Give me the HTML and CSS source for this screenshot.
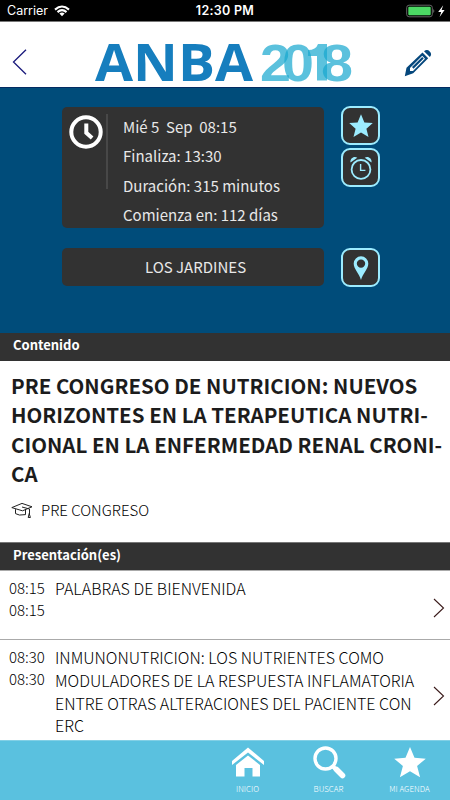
FILE: index.html
```html
<!DOCTYPE html>
<html lang="es">
<head>
<meta charset="utf-8">
<title>ANBA 2018</title>
<link rel="stylesheet" href="styles.css">
</head>
<body>
<div class="app">
  <div class="status">
    <div class="carrier"><span>Carrier</span>
      <svg width="16" height="12" viewBox="0 0 16 12" fill="none" stroke="#fff" stroke-width="2.1"><path d="M1 4.6Q8-1.6 15 4.6M3.5 7.1Q8 3.2 12.5 7.1"/><path d="M5.4 8.6Q8 6.4 10.6 8.6L8 11.3Z" fill="#fff" stroke="none"/></svg>
    </div>
    <div class="time">12:30 PM</div>
    <svg class="battery" width="41" height="14" viewBox="0 0 41 14"><rect x=".7" y="1.2" width="25.6" height="11.6" rx="2.4" fill="none" stroke="#666"/><rect x="2.3" y="2.8" width="22.4" height="8.4" rx="1" fill="#4cd964"/><path d="M27.3 5q2 2 0 4z" fill="#777"/><path d="M37.2 1.2 32.2 8h3l-1.6 5 5-6.9h-3z" fill="#fff"/></svg>
  </div>
  <header class="header">
    <svg class="back" width="16" height="26" viewBox="0 0 16 26" fill="none" stroke="#1a1a7c" stroke-width="1.3"><path d="M14 .8 1.5 13 14 25.2"/></svg>
    <svg class="logo" width="264" height="44" viewBox="0 0 264 44">
      <text class="anba" x="1" y="41" textLength="158" lengthAdjust="spacingAndGlyphs">ANBA</text>
      <g class="year"><text x="166" y="40.5" textLength="31" lengthAdjust="spacingAndGlyphs">2</text><text x="188" y="40.5" textLength="32" lengthAdjust="spacingAndGlyphs">0</text><path d="M224 4h9v36.5h-10V16h-9V10q8 0 10-6z"/><text x="227" y="40.5" textLength="32" lengthAdjust="spacingAndGlyphs">8</text></g>
    </svg>
    <svg class="pencil" width="28" height="28" viewBox="0 0 28 28"><path fill="#05477c" fill-rule="evenodd" d="M18.5 3.6 24.2 9.3 9.2 24.3.8 27.2 2.5 18.8ZM18.2 6.8 6 19v3h3L21 9.7Z"/><path fill="#05477c" d="M8 18 18.2 7.9l1.5 1.6L9.5 19.7ZM20 2.3q3-2.5 5.7.1t.1 5.6Z"/></svg>
  </header>
  <section class="hero">
    <div class="info">
      <svg class="clock" width="34" height="34" viewBox="0 0 34 34" fill="none" stroke="#fff" stroke-width="4"><circle cx="17" cy="17" r="14.7"/><path d="M17.3 8.5v9.3l5.8 5.2"/></svg>
      <div class="rule"></div>
      <div class="details"><div>Mié 5&nbsp; Sep&nbsp; 08:15</div><div>Finaliza: 13:30</div><div>Duración: 315 minutos</div><div>Comienza en: 112 días</div></div>
    </div>
    <div class="actions">
      <div class="btn"><svg width="26" height="26" viewBox="0 0 26 26"><path fill="#9cecff" d="m13 1.3 3.4 8.1 8.4.7-6.4 5.7 2.1 8.2-7.5-4.4L5.5 24l2.1-8.2-6.4-5.7 8.4-.7z"/></svg></div>
      <div class="btn"><svg width="26" height="26" viewBox="0 0 26 26" fill="none" stroke="#9cecff"><circle cx="13" cy="14.4" r="9.4" stroke-width="1.8"/><path d="M12.6 9v6.4h4.8" stroke-width="1.4"/><path d="M2.5 7.6C1.7 3 6.4.5 9.3 2.7Zm21 0C24.3 3 19.6.5 16.7 2.7Z" fill="#9cecff" stroke="none"/></svg></div>
    </div>
    <div class="place">LOS JARDINES</div>
    <div class="btn"><svg width="26" height="26" viewBox="0 0 26 26"><path fill="#9cecff" fill-rule="evenodd" d="M13 25C11 18.500 5.700 14 5.700 8.600a7.300 7.300 0 0 1 14.600 0C20.300 14 15 18.500 13 25ZM13 4.400a4.200 4.200 0 1 0 0 8.400 4.200 4.200 0 0 0 0-8.400Z"/></svg></div>
  </section>
  <h2 class="bar">Contenido</h2>
  <section class="content">
    <h1><span>PRE CONGRESO DE NUTRICION: NUEVOS</span><span>HORIZONTES EN LA TERAPEUTICA NUTRI-</span><span>CIONAL EN LA ENFERMEDAD RENAL CRONI-</span><span>CA</span></h1>
    <div class="tag"><svg width="22" height="17" viewBox="0 0 22 17" fill="none" stroke="#222" stroke-width="1"><path d="M.8 5.600 11 1.400 21 4.800 11.500 8.800ZM4.500 7.200v4.400q3 2.400 10 1v-5M11 5l7.500 2v6M17.200 15.500l1-4 1.200 4z"/></svg><span>PRE CONGRESO</span></div>
  </section>
  <h2 class="bar second">Presentación(es)</h2>
  <div class="row">
    <div class="hours"><div>08:15</div><div>08:15</div></div>
    <div class="subject"><div>PALABRAS DE BIENVENIDA</div></div>
    <svg class="chev" width="12" height="20" viewBox="0 0 12 20"><path d="m1 1 9.500 9L1 19"/></svg>
  </div>
  <div class="row last">
    <div class="hours"><div>08:30</div><div>08:30</div></div>
    <div class="subject"><div>INMUNONUTRICION: LOS NUTRIENTES COMO</div><div>MODULADORES DE LA RESPUESTA INFLAMATORIA</div><div>ENTRE OTRAS ALTERACIONES DEL PACIENTE CON</div><div>ERC</div></div>
    <svg class="chev" width="12" height="20" viewBox="0 0 12 20"><path d="m1 1 9.500 9L1 19"/></svg>
  </div>
  <nav class="tabs">
    <div class="tab"><svg width="34" height="34" viewBox="0 0 34 34" fill="#fff"><path d="M17 1.500 33 15v4L17 6.500 1 19v-4Z"/><path d="M17 9.500 29 19v11.500h-7.500V22h-8v8.500H5V19Z"/></svg><span>INICIO</span></div>
    <div class="tab"><svg width="34" height="34" viewBox="0 0 34 34" fill="none" stroke="#fff"><circle cx="13.500" cy="12.500" r="10.500" stroke-width="3.400"/><path d="m20.500 20 3 3" stroke-width="4"/><path d="m24.500 23.500 6 6" stroke-width="5.600" stroke-linecap="round"/></svg><span>BUSCAR</span></div>
    <div class="tab"><svg width="34" height="34" viewBox="0 0 34 34" fill="#fff"><path d="m17 1 4.500 10.800 11.300.9-8.700 7.200 3 11.400L17 25.200 6.900 31.300l3-11.400-8.700-7.200 11.300-.9z"/></svg><span>MI AGENDA</span></div>
  </nav>
</div>
</body>
</html>
```
FILE: styles.css
```css
* { box-sizing: border-box; }
body { margin: 0; font-family: "Noto Sans CJK SC", "Noto Sans", sans-serif; }
h1, h2 { margin: 0; }
svg { display: block; flex: none; }
.app { width: 450px; height: 800px; display: flex; flex-direction: column; background: #fff; overflow: hidden; }
.status { height: 21px; flex: none; background: #000; color: #fff; display: grid; grid-template-columns: 1fr auto 1fr; align-items: center; font: 12.5px/22px Inter, sans-serif; }
.carrier { display: flex; align-items: center; gap: 6px; padding-left: 7px; }
.carrier svg { margin-top: -1px; }
.time { font-weight: 600; letter-spacing: .3px; }
.battery { justify-self: end; margin-right: 3px; }
.header { height: 67px; flex: none; display: flex; align-items: flex-start; border-bottom: 1px solid #032c62; border-top: 1px solid #777; }
.back { margin: 27px 0 0 12px; }
.logo { margin: 18px 0 0 66px; }
.pencil { margin: 27px 0 0 46px; }
.anba { font: 700 52px "Open Sans", sans-serif; fill: #167ebe; }
.year { font: 700 52px "Liberation Sans", sans-serif; fill: #17a8cf; }
.year > * { opacity: .7; }
.hero { height: 245px; flex: none; background: #004c7a; padding: 19px 0 0 62px; display: grid; grid-template-columns: 262px 38px; grid-template-rows: 121px 38px; column-gap: 17px; row-gap: 20px; align-content: start; }
.info { background: #323232; border-radius: 5px; display: flex; color: #e8e8e8; font-size: 15px; line-height: 29.3px; }
.clock { margin: 8px 0 0 7px; }
.rule { width: 2px; height: 75px; margin: 7px 0 0 3px; background: #484848; }
.details { padding: 5px 0 0 15px; white-space: nowrap; }
.actions { display: flex; flex-direction: column; gap: 3px; margin-top: -1px; }
.btn { width: 39px; height: 39px; flex: none; border: 2.5px solid #9cecff; border-radius: 9px; background: #323232; display: grid; place-items: center; }
.place { height: 38px; background: #323232; border-radius: 5px; color: #e8e8e8; text-align: center; font-size: 15px; line-height: 38px; padding-left: 5px; }
.bar { height: 28px; flex: none; background: #323232; color: #fff; font-weight: 700; font-size: 13px; line-height: 24px; padding-left: 13px; }
.second { height: 29px; border-top: 1px solid #777; border-bottom: 1px solid #aaa; }
.content { height: 181px; flex: none; padding: 10px 0 0 11px; }
h1 { font-size: 20.5px; line-height: 29.33px; font-weight: 700; color: #1c1c1c; }
h1 span { display: block; width: max-content; white-space: nowrap; }
.tag { display: flex; align-items: center; gap: 8px; font-size: 15px; line-height: 24px; margin-top: 10px; font-weight: 300; color: #000; }
.row { height: 69px; flex: none; display: flex; position: relative; padding: 6px 11px 0 9px; border-bottom: 1px solid #aaa; font-weight: 300; color: #000; }
.last { height: 100px; border-bottom: 0; }
.hours { width: 46px; flex: none; font-size: 15px; line-height: 22px; }
.subject { flex: 1; font-size: 16px; line-height: 22.8px; white-space: nowrap; }
.chev { width: 12px; margin: 21px -6px 0 0; fill: none; stroke: #3a1a1a; stroke-width: 1.1; }
.last .chev { margin-top: 40px; }
.tabs { height: 60px; flex: none; background: #5ac1df; border-top: 1px solid #82d0e6; display: flex; justify-content: flex-end; }
.tab { width: 81px; display: flex; flex-direction: column; align-items: center; padding-top: 5px; color: #fff; font-size: 8px; line-height: 12px; font-weight: 300; gap: 3px; }
```
